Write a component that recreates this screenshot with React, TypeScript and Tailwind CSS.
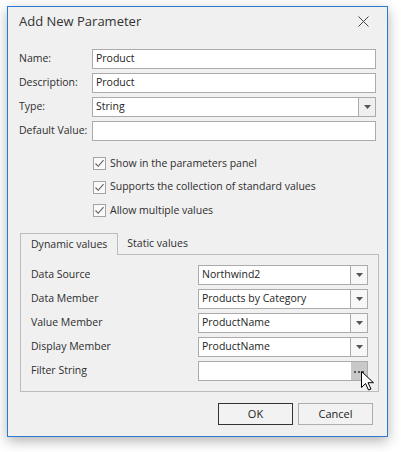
import { Fragment } from "react";

const font = "font-['Open_Sans','Noto_Sans',sans-serif]";

function Arrow() {
  return (
    <svg width="7" height="4" viewBox="0 0 7 4">
      <path d="M0 0h7L3.5 4z" fill="#555" />
    </svg>
  );
}

function TextBox({ value }: { value?: string }) {
  return (
    <div className="h-[20px] border border-[#ababab] bg-white flex items-center px-[3px] text-[#1e1e1e]">
      {value}
    </div>
  );
}

function Combo({ value, light }: { value: string; light?: boolean }) {
  return (
    <div className="h-[20px] border border-[#ababab] bg-white flex">
      <div className="flex-1 flex items-center px-[3px] text-[#1e1e1e]">{value}</div>
      <div
        className={`w-[17px] border-l border-[#ababab] flex items-center justify-center ${
          light ? "bg-[#f7f7f7]" : "bg-[#efefef]"
        }`}
      >
        <Arrow />
      </div>
    </div>
  );
}

function Check({ label }: { label: string }) {
  return (
    <div className="h-[23.5px] flex items-center gap-[4px]">
      <div className="w-[13px] h-[13px] border border-[#a3a3a3] bg-[#fafafa] flex items-center justify-center">
        <svg width="11" height="11" viewBox="0 0 11 11">
          <path d="M1.5 5.5l2.7 2.8L9.5 2.2" stroke="#5f5f5f" strokeWidth="1.1" fill="none" />
        </svg>
      </div>
      <span>{label}</span>
    </div>
  );
}

export default function App() {
  const rows = [
    { label: "Data Source", value: "Northwind2" },
    { label: "Data Member", value: "Products by Category" },
    { label: "Value Member", value: "ProductName" },
    { label: "Display Member", value: "ProductName" },
  ];

  return (
    <div className={`w-[401px] h-[452px] bg-white pt-[6px] pl-[7px] ${font} text-[10.5px] text-[#2e2e2e]`}>
      <div className="w-[381px] h-[431px] border border-[#2b79d0] bg-[#f0f0f0] shadow-[0_4px_12px_rgba(0,0,0,0.3)] flex flex-col">
        {/* title */}
        <div className="h-[42px] flex items-start justify-between pl-[11px] pr-[18px] pt-[4px]">
          <span className="text-[13px] leading-[20px] text-[#333]">Add New Parameter</span>
          <svg width="11" height="11" viewBox="0 0 11 11" className="mt-[5px]">
            <path d="M0.5 0.5l10 10M10.5 0.5l-10 10" stroke="#444" strokeWidth="1" />
          </svg>
        </div>

        {/* main fields */}
        <div className="px-[11px] grid grid-cols-[73px_1fr] gap-y-[4px] items-center">
          <span>Name:</span>
          <TextBox value="Product" />
          <span>Description:</span>
          <TextBox value="Product" />
          <span>Type:</span>
          <Combo value="String" />
          <span>Default Value:</span>
          <TextBox />
        </div>

        {/* options */}
        <div className="mt-[11px] pl-[85px] flex flex-col">
          <Check label="Show in the parameters panel" />
          <Check label="Supports the collection of standard values" />
          <Check label="Allow multiple values" />
        </div>

        {/* tabs */}
        <div className="mt-[10.5px] ml-[12px] w-[359px] flex flex-col">
          <div className="flex items-end h-[21px]">
            <div className="h-[22px] -mb-px z-10 border border-b-0 border-[#bcbcbc] bg-[#f0f0f0] pl-[10px] pr-[10px] flex items-center">
              Dynamic values
            </div>
            <div className="h-[21px] px-[9px] flex items-center">Static values</div>
          </div>
          <div className="border border-[#bcbcbc] px-[10px] py-[10px] grid grid-cols-[1fr_170px] gap-y-[4px] items-center">
            {rows.map((r) => (
              <Fragment key={r.label}>
                <span>{r.label}</span>
                <Combo value={r.value} light />
              </Fragment>
            ))}
            <span>Filter String</span>
            <div className="relative h-[20px] border border-[#ababab] bg-white flex">
              <div className="flex-1" />
              <div className="w-[16px] bg-[#c8c8c8] flex items-center justify-center gap-[2px] pt-[1px]">
                <span className="w-[2px] h-[2px] bg-[#5a5a5a]" />
                <span className="w-[2px] h-[2px] bg-[#5a5a5a]" />
                <span className="w-[2px] h-[2px] bg-[#5a5a5a]" />
              </div>
              <svg
                width="13"
                height="20"
                viewBox="0 0 13 20"
                className="absolute left-[162px] top-[9px]"
              >
                <path
                  d="M0.5 0.5v16l4-4 3 6.5 2.5-1-3-6.3h5.5z"
                  fill="white"
                  stroke="black"
                  strokeWidth="1"
                  strokeLinejoin="miter"
                />
              </svg>
            </div>
          </div>
        </div>

        {/* buttons */}
        <div className="mt-[11px] flex justify-end gap-[5px] pr-[14px]">
          <button className="w-[75px] h-[22px] border border-[#333] bg-[#f2f2f2] text-[11px] text-[#222]">OK</button>
          <button className="w-[75px] h-[22px] border border-[#adadad] bg-[#f2f2f2] text-[11px] text-[#222]">Cancel</button>
        </div>
      </div>
    </div>
  );
}
